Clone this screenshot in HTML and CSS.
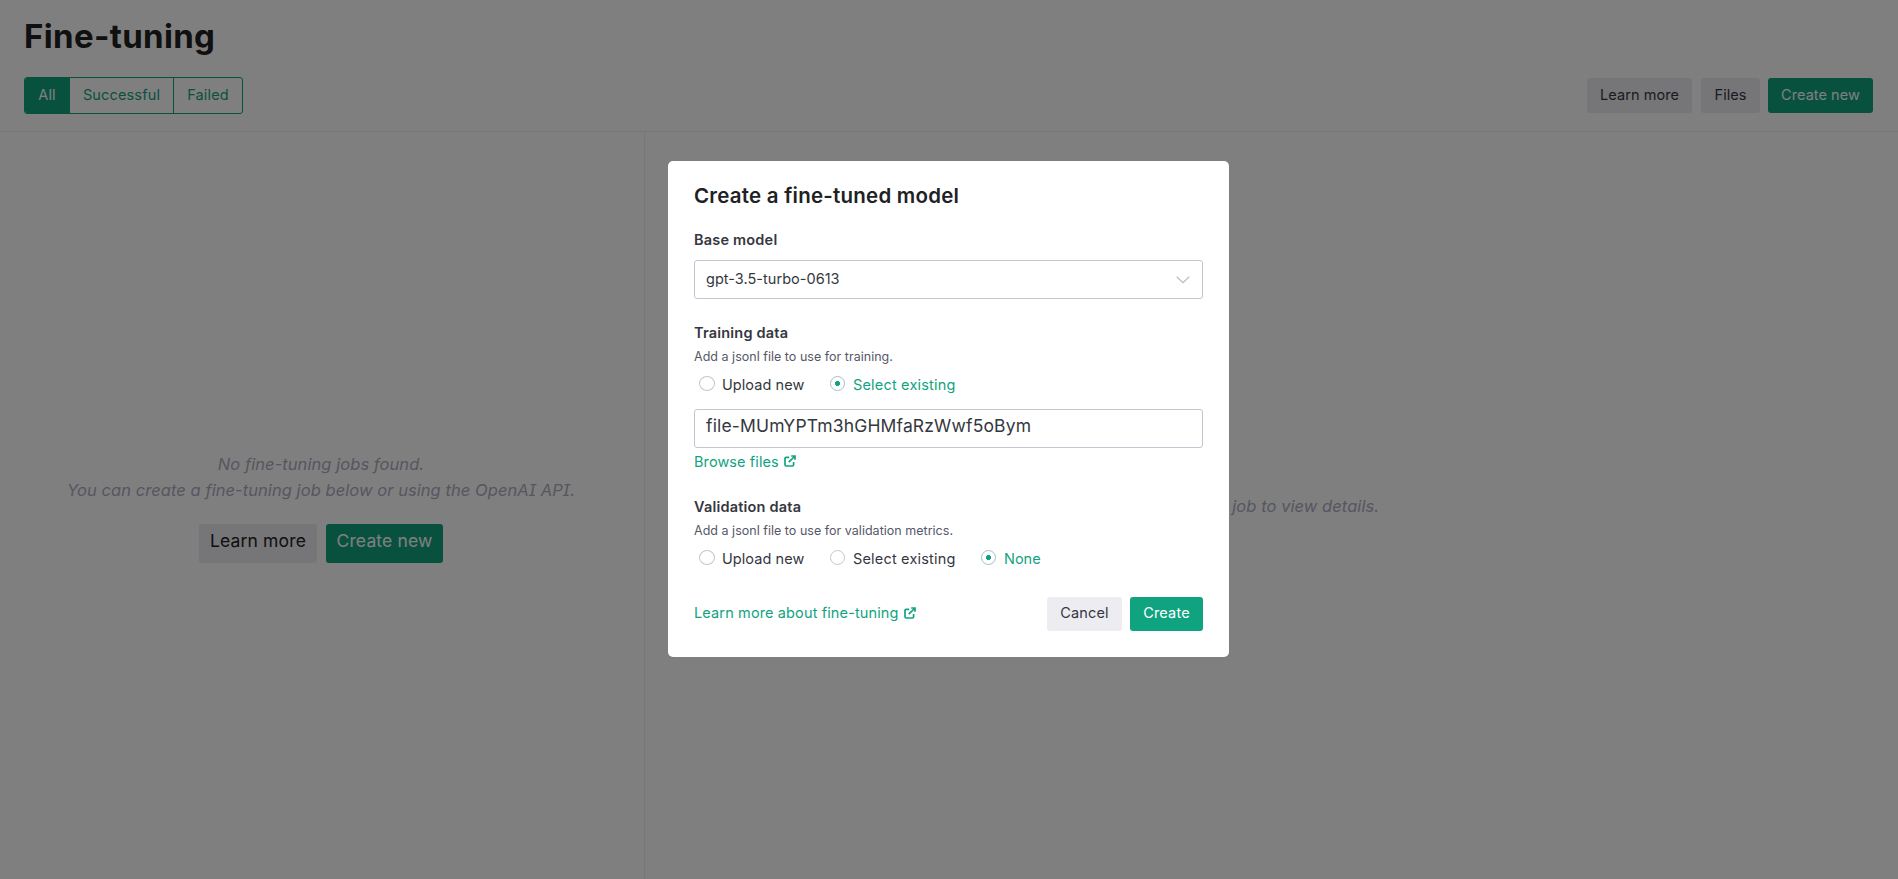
FILE: index.html
```html
<!DOCTYPE html>
<html lang="en">
<head>
<meta charset="utf-8">
<title>Fine-tuning</title>
<link rel="stylesheet" href="styles.css">
</head>
<body>
<div class="page">
  <header class="header">
    <h1 class="title">Fine-tuning</h1>
    <div class="toolbar">
      <div class="segments">
        <div class="segment seg-all active">All</div>
        <div class="segment seg-ok">Successful</div>
        <div class="segment seg-failed">Failed</div>
      </div>
      <div class="actions">
        <div class="btn neutral w-learn">Learn more</div>
        <div class="btn neutral w-files">Files</div>
        <div class="btn primary w-new">Create new</div>
      </div>
    </div>
  </header>
  <main class="columns">
    <section class="jobs">
      <p class="empty">No fine-tuning jobs found.<br>You can create a fine-tuning job below or using the OpenAI API.</p>
      <div class="jobs-actions">
        <div class="btn large neutral w-learn-lg">Learn more</div>
        <div class="btn large primary w-new-lg">Create new</div>
      </div>
    </section>
    <section class="details">
      <p class="empty">Select a job to view details.</p>
    </section>
  </main>
</div>
<div class="overlay">
  <div class="modal">
    <h2 class="modal-title">Create a fine-tuned model</h2>
    <div class="label">Base model</div>
    <div class="field select">
      <span>gpt-3.5-turbo-0613</span>
      <svg class="chevron" width="14" height="8" viewBox="0 0 14 8"><path d="M0.7 0.8 7 6.7 13.3 0.8"/></svg>
    </div>
    <div class="label section">Training data</div>
    <div class="desc">Add a jsonl file to use for training.</div>
    <div class="radios">
      <div class="radio r1"><i class="dot"></i><span>Upload new</span></div>
      <div class="radio r2 checked"><i class="dot"></i><span>Select existing</span></div>
    </div>
    <div class="field file"><span>file-MUmYPTm3hGHMfaRzWwf5oBym</span></div>
    <div class="link browse"><span>Browse files</span>
      <svg class="ext" width="12" height="12" viewBox="0 0 12 12"><path d="M5.2 2.4H2.2Q1 2.4 1 3.6V9.8Q1 11 2.2 11H8.4Q9.6 11 9.6 9.8V6.9M7.2 1H11V4.8M11 1 4.8 7.2"/></svg>
    </div>
    <div class="label section">Validation data</div>
    <div class="desc">Add a jsonl file to use for validation metrics.</div>
    <div class="radios">
      <div class="radio r1"><i class="dot"></i><span>Upload new</span></div>
      <div class="radio r2"><i class="dot"></i><span>Select existing</span></div>
      <div class="radio checked"><i class="dot"></i><span>None</span></div>
    </div>
    <div class="footer">
      <div class="link more"><span>Learn more about fine-tuning</span>
        <svg class="ext" width="12" height="12" viewBox="0 0 12 12"><path d="M5.2 2.4H2.2Q1 2.4 1 3.6V9.8Q1 11 2.2 11H8.4Q9.6 11 9.6 9.8V6.9M7.2 1H11V4.8M11 1 4.8 7.2"/></svg>
      </div>
      <div class="footer-actions">
        <div class="btn neutral w-cancel">Cancel</div>
        <div class="btn primary w-create">Create</div>
      </div>
    </div>
  </div>
</div>
</body>
</html>
```
FILE: styles.css
```css
* { box-sizing: border-box; }
body {
  margin: 0;
  height: 879px;
  overflow: hidden;
  background: #fff;
  color: #353740;
  font: 14.5px/20px Inter, "Liberation Sans", sans-serif;
  white-space: nowrap;
}
h1, h2, p { margin: 0; }
.page { height: 879px; display: flex; flex-direction: column; }
.header { height: 132px; padding: 16px 25px 0 24px; border-bottom: 1px solid #ececf1; }
.title { height: 40px; font-size: 33px; line-height: 40px; font-weight: 650; letter-spacing: .35px; color: #202123; }
.toolbar { display: flex; justify-content: space-between; margin-top: 21px; }
.segments { display: flex; width: 219px; height: 37px; border: 1px solid #10a37f; border-radius: 3px; overflow: hidden; color: #10a37f; line-height: 34px; letter-spacing: .15px; text-align: center; }
.segment + .segment { border-left: 1px solid #10a37f; }
.seg-all { width: 44px; }
.seg-ok { width: 104px; }
.seg-failed { flex: 1; }
.segment.active { background: #10a37f; color: #fff; }
.actions { display: flex; gap: 8px; padding-top: 1px; }
.btn { height: 35px; line-height: 33px; border-radius: 3px; text-align: center; letter-spacing: .05px; }
.neutral { background: #ececf1; color: #353740; }
.primary { background: #10a37f; color: #fff; }
.w-learn { width: 105px; margin-right: 1px; }
.w-files { width: 59px; }
.w-new { width: 105px; }
.columns { flex: 1; display: flex; }
.jobs { width: 645px; padding: 319px 2px 0 0; border-right: 1px solid #ececf1; text-align: center; }
.empty { font-size: 16.5px; line-height: 26px; font-style: italic; letter-spacing: .06px; color: #acacbe; font-feature-settings: "cv08"; }
.jobs-actions { display: flex; justify-content: center; gap: 9px; margin-top: 21px; }
.btn.large { height: 39px; line-height: 34px; font-size: 17.5px; letter-spacing: .15px; }
.jobs-actions .neutral { color: #202123; }
.w-learn-lg { width: 118px; }
.w-new-lg { width: 117px; }
.details { flex: 1; padding-top: 361px; text-align: center; }

.overlay { position: absolute; inset: 0; background: rgba(0, 0, 0, .5); display: flex; justify-content: center; align-items: flex-start; padding: 161px 1px 0 0; }
.modal { width: 561px; height: 496px; padding: 23px 26px 0; background: #fff; border-radius: 5px; }
.modal-title { font-size: 20.5px; line-height: 24px; font-weight: 600; letter-spacing: .23px; color: #202123; }
.label { font-weight: 600; margin-top: 22px; letter-spacing: .2px; }
.label.section { margin-top: 24px; }
.field { height: 39px; padding: 0 12px 0 11px; border: 1px solid #c5c5d2; border-radius: 3px; display: flex; align-items: center; justify-content: space-between; }
.select { margin-top: 10px; }
.select span { padding-bottom: 2px; letter-spacing: .03px; }
.chevron { fill: none; stroke: #b9b9c8; stroke-width: 1.2; }
.desc { margin-top: 4px; font-size: 12.5px; line-height: 19px; letter-spacing: .02px; color: #565869; }
.radios { display: flex; height: 20px; margin-top: 9px; padding-left: 5px; }
.radio { display: flex; gap: 8px; }
.r1 { width: 131px; gap: 7px; letter-spacing: .06px; }
.r2 { width: 151px; letter-spacing: .18px; }
.dot { display: block; width: 15px; height: 15px; margin-top: 1px; border: 1px solid #c5c5d2; border-radius: 50%; }
.r1 .dot { width: 16px; }
.checked { color: #10a37f; }
.checked .dot { border-color: #9fc4c0; background: radial-gradient(circle, #10a37f 2.2px, transparent 2.8px); }
.file { margin-top: 14px; padding-bottom: 5px; font-size: 17.5px; letter-spacing: .16px; }
.link { display: flex; gap: 5px; color: #10a37f; }
.ext { margin-top: 4px; fill: none; stroke: #10a37f; stroke-width: 1.7; }
.browse { height: 21px; margin-top: 4px; letter-spacing: .09px; }
.browse .ext { margin-top: 3px; }
.browse + .section { margin-top: 24px; }
.footer { display: flex; justify-content: space-between; margin-top: 28px; }
.footer .link { padding-top: 6px; }
.more { letter-spacing: .13px; }
.footer-actions { display: flex; gap: 8px; }
.footer-actions .btn { height: 34px; line-height: 32px; letter-spacing: .15px; }
.w-cancel { width: 75px; }
.w-create { width: 73px; }
```
